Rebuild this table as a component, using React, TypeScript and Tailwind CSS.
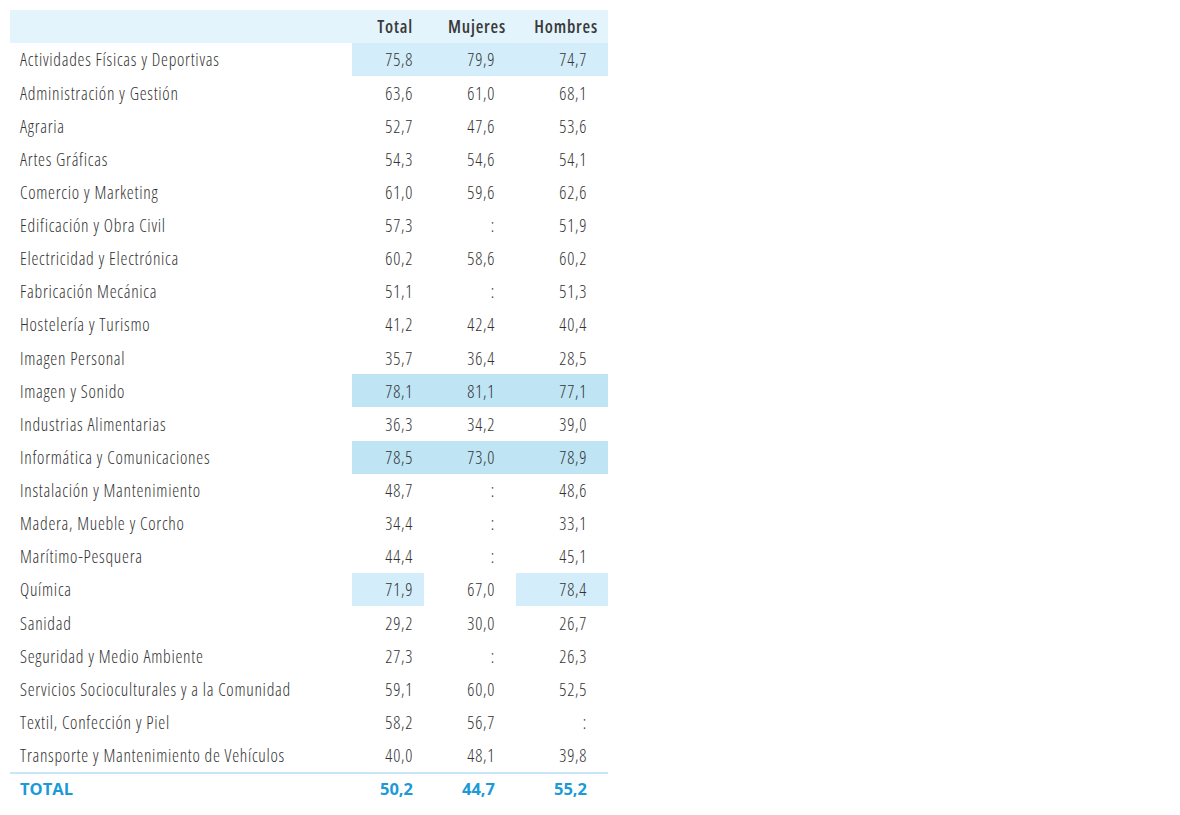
const rows: [string, string, string, string, string?][] = [
  ["Actividades Físicas y Deportivas", "75,8", "79,9", "74,7", "light"],
  ["Administración y Gestión", "63,6", "61,0", "68,1"],
  ["Agraria", "52,7", "47,6", "53,6"],
  ["Artes Gráficas", "54,3", "54,6", "54,1"],
  ["Comercio y Marketing", "61,0", "59,6", "62,6"],
  ["Edificación y Obra Civil", "57,3", ":", "51,9"],
  ["Electricidad y Electrónica", "60,2", "58,6", "60,2"],
  ["Fabricación Mecánica", "51,1", ":", "51,3"],
  ["Hostelería y Turismo", "41,2", "42,4", "40,4"],
  ["Imagen Personal", "35,7", "36,4", "28,5"],
  ["Imagen y Sonido", "78,1", "81,1", "77,1", "strong"],
  ["Industrias Alimentarias", "36,3", "34,2", "39,0"],
  ["Informática y Comunicaciones", "78,5", "73,0", "78,9", "strong"],
  ["Instalación y Mantenimiento", "48,7", ":", "48,6"],
  ["Madera, Mueble y Corcho", "34,4", ":", "33,1"],
  ["Marítimo-Pesquera", "44,4", ":", "45,1"],
  ["Química", "71,9", "67,0", "78,4", "split"],
  ["Sanidad", "29,2", "30,0", "26,7"],
  ["Seguridad y Medio Ambiente", "27,3", ":", "26,3"],
  ["Servicios Socioculturales y a la Comunidad", "59,1", "60,0", "52,5"],
  ["Textil, Confección y Piel", "58,2", "56,7", ":"],
  ["Transporte y Mantenimiento de Vehículos", "40,0", "48,1", "39,8"],
];

function bg(kind: string | undefined, col: number) {
  if (kind === "strong") return "bg-[#bfe4f4]";
  if (kind === "light") return "bg-[#d3eefa]";
  if (kind === "split" && col !== 1) return "bg-[#d3eefa]";
  return "";
}

export default function App() {
  return (
    <div className="w-[1180px] h-[815px] bg-white pt-[10px] pl-[10px] font-['Open_Sans',sans-serif] text-[#333333]">
      <div className="w-[598px]">
        {/* header */}
        <div className="flex h-[33px] items-center bg-[#e3f4fc] text-[17.5px] font-semibold font-stretch-condensed tracking-[0.8px] text-[#3a3a3a]">
          <div className="w-[342px]" />
          <div className="w-[72px] pr-[11px] text-right">Total</div>
          <div className="w-[92px] pr-[10px] text-right">Mujeres</div>
          <div className="w-[92px] pr-[10px] text-right">Hombres</div>
        </div>

        {rows.map(([name, t, m, h, kind]) => (
          <div key={name} className="flex h-[33.14px] text-[17.5px] font-light font-stretch-condensed tracking-[0.72px]">
            <div className="flex w-[342px] items-center pl-[10px]">{name}</div>
            <div className={`flex w-[72px] items-center justify-end pr-[11px] ${bg(kind, 0)}`}>{t}</div>
            <div className={`flex w-[92px] items-center justify-end pr-[21px] ${bg(kind, 1)}`}>{m}</div>
            <div className={`flex w-[92px] items-center justify-end pr-[21px] ${bg(kind, 2)}`}>{h}</div>
          </div>
        ))}

        {/* total */}
        <div className="flex h-[33px] items-center border-t-2 border-[#c6e8f6] text-[16.5px] font-bold text-[#1a9ad6]">
          <div className="w-[342px] pl-[10px]">TOTAL</div>
          <div className="w-[72px] pr-[11px] text-right">50,2</div>
          <div className="w-[92px] pr-[21px] text-right">44,7</div>
          <div className="w-[92px] pr-[21px] text-right">55,2</div>
        </div>
      </div>
    </div>
  );
}
